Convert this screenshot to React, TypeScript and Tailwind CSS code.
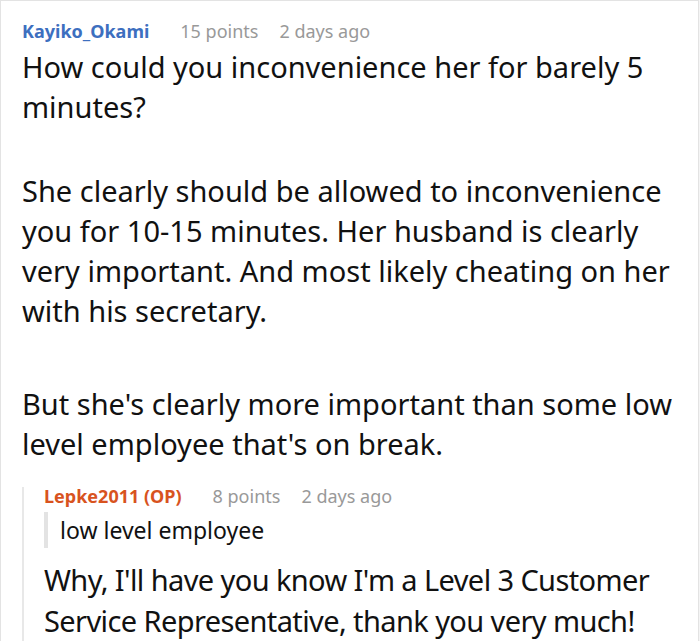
export default function App() {
  return (
    <div className="h-[641px] w-[700px] overflow-hidden bg-[#f5f5f5] font-['Noto_Sans',sans-serif]">
      <div className="h-full w-[699px] border-l border-t border-r border-[#e3e3e3] bg-white pl-[21px] pr-4 pt-[17px]">
        {/* comment header */}
        <div className="flex items-baseline text-[18px] leading-[26px]">
          <span className="font-bold text-[#3d6fbf]">Kayiko_Okami</span>
          <span className="ml-[31px] text-[#999]">15 points</span>
          <span className="ml-[21px] text-[#999]">2 days ago</span>
        </div>
        <div className="mt-[3px] text-[29px] leading-[40px] text-[#111]">
          <p>How could you inconvenience her for barely 5 minutes?</p>
          <p className="mt-[44px]">
            She clearly should be allowed to inconvenience you for 10-15 minutes. Her husband is clearly very
            important. And most likely cheating on her with his secretary.
          </p>
          <p className="mt-[53px]">But she's clearly more important than some low level employee that's on break.</p>
        </div>

        {/* reply */}
        <div className="mt-[23px] border-l-2 border-[#e8e8e8] pl-[20px]">
          <div className="flex items-baseline text-[18px] leading-[18px]">
            <span className="font-bold text-[#d8531e]">Lepke2011 (OP)</span>
            <span className="ml-[31px] text-[#999]">8 points</span>
            <span className="ml-[21px] text-[#999]">2 days ago</span>
          </div>
          <div className="mt-[7px] border-l-4 border-[#e3e3e3] pl-[12px] text-[23px] leading-[36px] text-[#111]">
            low level employee
          </div>
          <p className="mt-[11px] text-[29px] leading-[41px] tracking-[-0.6px] text-[#111]">
            Why, I'll have you know I'm a Level 3 Customer Service Representative, thank you very much!
          </p>
        </div>
      </div>
    </div>
  );
}
